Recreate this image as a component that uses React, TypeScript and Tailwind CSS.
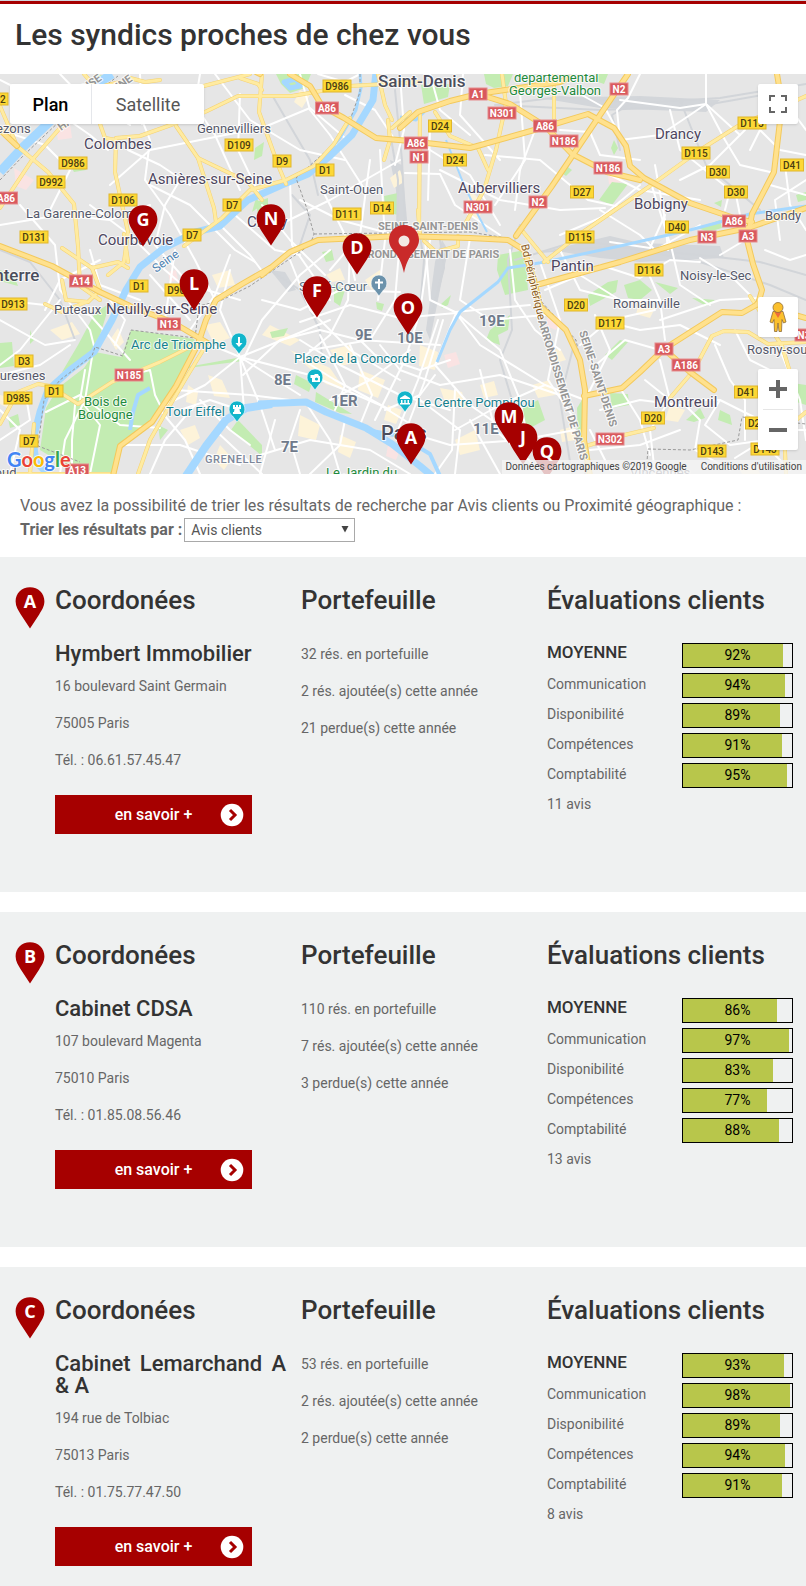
import { type ReactNode } from 'react';

type Point = [number, number];

const parks = [
  'M131 330L160 334L194 339L196 346L178 378L160 408L146 424L119 445L112 474H80L60 462L40 450L46 408L58 388L84 368L95 352L121 357Z',
  'M95 313L110 303L100 335L88 357L62 372L78 345Z',
  'M276 74H311L305 88L290 93L281 84Z',
  'M421 85L450 84L448 97L424 104Z',
  'M484 74H513L508 86L494 88L486 84Z',
  'M597 74H608L604 84L598 82Z',
  'M95 74L105 76L100 80Z',
  'M252 212L256 198L262 205Z',
  'M256 202L268 198V210L258 216Z',
  'M384 196L398 193V215L386 212Z',
  'M612 182L628 184L612 205L599 200Z',
  'M614 140L618 148L614 155L611 148Z',
  'M565 165L572 170L566 176L560 172Z',
  'M498 255L525 250L528 290L505 295L497 270Z',
  'M490 330L510 315L508 330L498 335L500 345L486 340Z',
  'M588 295L608 282L618 280L616 292L590 306Z',
  'M624 285L640 280L652 290L640 300L628 298Z',
  'M655 282L678 288L670 294Z',
  'M692 298L715 300L706 306Z',
  'M698 228L720 220L722 228L708 232Z',
  'M714 203L722 200L721 207Z',
  'M610 393L628 394L629 405L612 408Z',
  'M577 408L585 395L583 440H578Z',
  'M720 410L730 415L732 425L718 420Z',
  'M686 420L700 408L705 418L694 422Z',
  'M605 355L620 340L628 342L612 360Z',
  'M316 392L352 414L340 413L315 402Z',
  'M296 375L312 383L309 392L294 384Z',
  'M523 408L538 400L545 420L530 428L520 420Z',
  'M334 284L345 290L340 306L334 302Z',
  'M322 252L332 250L334 260L326 262Z',
  'M270 332L288 328L284 336L272 338Z',
  'M187 367L242 357L243 361L188 368Z',
  'M231 430L238 420L262 445L262 456Z',
  'M158 425L168 430L160 440Z',
  'M0 343L12 342L14 366L0 368Z',
  'M0 270L14 276L18 286L0 281Z',
  'M8 418L18 414L20 425L10 428Z',
  'M70 165L82 160L86 170L74 172Z',
  'M255 148L264 142L262 156L254 160Z',
  'M440 305L451 295L448 305L442 308Z',
  'M376 302L384 304L382 311L377 309Z',
  'M786 382L806 385V405L790 400Z',
  'M30 330L34 340L30 344Z',
  'M796 195L806 192V200L798 202Z',
];

const blocks = [
  'M262 335L290 346L300 340L270 325Z',
  'M205 325L220 322L230 338L214 344Z',
  'M208 375L222 380L230 398L214 396Z',
  'M212 275L230 270L235 285L218 288Z',
  'M188 385L198 392L196 405L186 402Z',
  'M290 350L330 368L345 390L326 384Z',
  'M330 350L350 345L360 362L340 366Z',
  'M360 370L385 380L378 398L358 390Z',
  'M420 345L438 352L435 370L419 366Z',
  'M388 405L402 410L396 424L384 420Z',
  'M440 388L462 392L466 408L446 405Z',
  'M480 385L494 381L498 395L484 398Z',
  'M340 435L356 442L350 458L338 452Z',
  'M455 440L475 430L480 450L460 455Z',
  'M300 415L320 425L316 440L298 436Z',
  'M180 430L195 425L200 438L188 445Z',
  'M220 445L232 458L224 470L214 460Z',
  'M365 280L380 270L386 285L372 290Z',
  'M326 275L340 268L345 280L332 282Z',
  'M300 90L310 95L302 108L294 102Z',
  'M390 178L400 170L404 182L394 188Z',
  'M470 190L485 205L478 220L465 212Z',
  'M532 385L550 380L555 395L538 398Z',
  'M560 430L574 426L576 440L562 442Z',
  'M640 300L655 308L650 318L636 314Z',
  'M670 405L685 410L678 422L665 420Z',
  'M548 352L560 348L566 360L552 364Z',
  'M50 330L72 322L80 334L62 340Z',
  'M110 340L118 328L124 342L116 350Z',
  'M0 395L14 398L8 408L0 404Z',
  'M740 470L755 462L760 474H742Z',
];

const pinkBlocks = [
  'M14 168L34 180L26 190L16 186Z',
  'M56 128L70 124L72 138L58 140Z',
  'M608 175L620 170L622 182L609 184Z',
  'M444 355L456 352L460 364L448 368Z',
  'M168 272L176 270L178 280L170 282Z',
  'M388 445L400 450L396 460L386 456Z',
  'M548 314L562 318L556 330L546 326Z',
];

const rails = [
  'M495 105L560 97L640 103L720 98L806 84',
  'M498 105L600 110L700 106L780 92',
  'M515 260L580 240L640 250L700 255L760 262L806 275',
  'M540 252L620 246L700 262L770 285L806 300',
  'M395 90L402 160L405 225',
  'M388 120L398 180L397 230',
  'M418 225L424 260L420 310',
  'M440 240L444 268L430 320',
  'M270 270L300 290L320 330L322 360',
  'M292 195L310 215L300 245',
  'M620 150L612 115L640 98',
  'M272 95L310 160L318 195',
  'M0 250L30 262L60 300L75 340',
  'M520 225L508 260L512 330L500 360L512 400',
  'M680 100L706 165L760 210',
  'M575 340L560 400L572 474',
];

const rivers = [
  { d: 'M0 172L22 148L60 112L88 90L112 74', w: 9 },
  { d: 'M376 72L373 100L352 135L330 156L308 174L284 184L248 200L220 226L196 232L164 248L140 267L126 290L112 320L94 352L70 370L48 390L40 412L33 440L36 462L50 476', w: 7 },
  { d: 'M360 72L361 88L356 110L340 138L318 164L300 174', w: 3 },
  { d: 'M272 404L246 408L226 420L206 446L186 476', w: 8 },
  { d: 'M258 404L306 402L326 412L366 428L392 444L420 466L432 476', w: 7 },
  { d: 'M366 430L400 436L430 454L440 476', w: 4 },
  { d: 'M437 362L450 330L460 312L498 282L508 268L545 262L620 246L690 230L750 214L806 206', w: 3 },
  { d: 'M446 140L462 180L478 215L487 232', w: 2 },
  { d: 'M400 117L416 120L424 112', w: 3 },
  { d: 'M150 388L138 395L133 412L130 430', w: 4 },
  { d: 'M284 82L296 79L300 86L290 88Z', w: 5 },
];

const streets = [
  'M0 80L40 100L90 135L108 150', 'M60 74L85 100L130 125', 'M130 90L150 140L145 180L170 215', 'M110 185L150 150L200 140L250 130',
  'M0 130L45 145L70 170L50 210', 'M0 225L60 215L110 220L150 205', 'M20 205L55 245L60 290L90 330L95 350', 'M140 74L142 124',
  'M200 74L195 105L215 135L240 190', 'M215 74L250 120L300 150L345 160', 'M240 94L238 150L262 200', 'M262 128L310 108L345 138',
  'M300 74L310 110L330 135L365 190', 'M345 95L375 110L395 140', 'M318 74L345 82L360 74', 'M150 185L190 205L235 250L255 262',
  'M170 215L195 260L215 300', 'M180 180L165 205L155 245', 'M128 150L160 165L190 185', 'M90 205L130 235L165 270L200 300',
  'M220 225L250 255L265 275', 'M235 215L275 250L300 255', 'M262 205L290 240L325 275', 'M290 180L292 245L330 300',
  'M300 200L340 220L395 235', 'M325 195L345 235L355 280', 'M370 160L360 235L330 270', 'M380 150L385 240L378 300',
  'M285 222L330 200L400 160', 'M400 74L404 130L395 165', 'M430 74L440 110L470 135', 'M463 74L460 115L500 160',
  'M520 92L525 160L495 205', 'M485 155L540 160L588 200L620 207', 'M440 170L500 200L560 210L605 208', 'M405 173L440 174L455 205L500 235',
  'M422 145L470 175L500 225', 'M430 130L428 200', 'M535 130L520 170L515 210', 'M560 130L590 132L600 155L640 160',
  'M580 94L605 108L620 135', 'M640 74L628 98L617 110L620 140', 'M620 100L680 108L706 104L740 135', 'M706 74L706 104L690 115L660 135L620 140',
  'M706 104L725 140L740 165L770 172', 'M670 110L680 150L730 190L725 210', 'M655 165L665 220L668 250', 'M600 170L640 190L700 200',
  'M680 180L710 165L745 130', 'M750 150L760 130L780 150L806 155', 'M780 95L806 130', 'M770 185L806 195', 'M785 165L790 205L806 230',
  'M735 190L745 240L720 255', 'M600 210L640 235L655 250L700 225', 'M560 235L600 218L640 185', 'M665 215L650 248L610 242',
  'M650 180L672 250L680 285L710 305', 'M560 250L580 290L620 300', 'M545 290L580 275L620 300L660 300', 'M600 265L640 278L670 260L700 262',
  'M645 265L660 300L665 340', 'M700 258L735 280L750 295', 'M660 320L720 300L760 298', 'M600 320L640 330L680 325L720 345',
  'M580 345L610 320L655 310', 'M590 370L625 340L660 350', 'M585 400L610 350L595 315', 'M620 388L640 420L650 455',
  'M645 380L670 400L720 400L760 420', 'M680 400L700 420L695 450L730 470', 'M720 400L705 425L730 445L765 440', 'M715 345L730 380L745 400L745 440',
  'M735 330L750 360L790 380', 'M660 360L670 400L650 430L655 474', 'M600 410L640 400L680 405', 'M590 430L610 470', 'M680 430L640 445L590 450',
  'M540 262L560 320L548 380L575 420', 'M510 250L515 300L535 330L560 350', 'M470 238L460 300L490 320L545 315', 'M425 240L430 300L455 312L530 305',
  'M456 313L480 345L545 385L585 400', 'M456 313L435 365L470 405L520 440', 'M456 313L400 318L350 305L300 322', 'M456 313L500 350L520 400L530 450',
  'M430 240L420 312L405 360L375 420', 'M438 320L418 380L398 430', 'M443 320L424 383L404 435', 'M400 240L395 300L370 340L310 350',
  'M350 250L348 300L330 335L300 360', 'M290 260L310 310L350 350L400 380', 'M262 300L300 310L340 290L400 292', 'M243 375L280 340L320 330L360 340L440 345',
  'M243 360L262 320L300 275L330 250', 'M240 357L204 342', 'M240 357L310 375L380 405L420 430', 'M240 357L300 395', 'M240 357L260 405L275 450',
  'M240 357L205 385L165 405', 'M240 357L220 310L230 270', 'M240 357L270 345L330 320', 'M240 357L244 410',
  'M300 340L340 365L400 395L450 410', 'M295 355L335 380L390 410', 'M320 335L345 385L335 410', 'M350 345L372 395L360 425', 'M380 345L400 370L440 385',
  'M330 400L370 380L410 350', 'M385 410L420 395L435 375', 'M360 340L375 355L420 370L450 360', 'M420 400L460 430L455 474', 'M440 385L500 375L560 395',
  'M455 430L500 405L545 385', 'M400 430L450 445L520 440L575 430', 'M455 390L452 450L435 474', 'M470 420L500 474', 'M480 370L495 430L540 470',
  'M300 410L290 440L300 474', 'M306 403L330 440L340 474', 'M345 420L340 445L310 474', 'M260 455L310 440L370 450L410 474', 'M275 420L260 474',
  'M215 430L262 474', 'M240 410L210 400L180 410', 'M200 400L230 430L250 445', 'M160 410L185 440L200 474', 'M195 405L165 440L150 474',
  'M175 390L250 395L290 400', 'M120 445L180 445L240 465', 'M92 357L85 400L65 440L60 474', 'M75 405L72 440L72 474', 'M46 412L80 395L120 425L160 428',
  'M85 370L80 400L100 425L90 474', 'M130 375L150 370L155 395L160 405', 'M75 340L45 345L0 320', 'M0 300L45 305L90 315L130 360', 'M60 300L40 325L20 350L0 365',
  'M0 375L40 365L70 345', 'M0 440L30 420L25 390', 'M10 474L20 430L0 410', 'M110 300L125 320L115 345', 'M100 260L60 280L45 310', 'M90 250L100 285L140 300',
  'M155 245L190 285L240 300', 'M150 275L190 320', 'M175 250L165 320', 'M230 255L215 295L190 330', 'M765 445L790 470', 'M735 458L780 430L806 430',
  'M780 350L800 400L806 440', 'M765 250L790 260L806 255', 'M780 240L775 200L806 180',
];

const arteries = [
  'M0 106L17 146L48 172L74 204L78 246L80 286L100 300', 'M0 208L32 160L60 128L88 103', 'M100 124L105 138L116 140L115 172L121 200L128 232L124 262L108 275',
  'M116 138L140 136L168 126L205 112L238 96L292 96L350 86L420 82', 'M176 126L198 158L248 182L262 200', 'M198 158L214 208L216 222',
  'M84 74L96 88L120 82', 'M196 88L250 74', 'M262 74L259 112L278 165L286 184', 'M130 78L145 82L160 80', 'M240 78L258 84L262 90',
  'M184 246L222 218L250 190L286 180L314 166L334 144L350 118', 'M62 248L92 268L118 262L128 268', 'M62 280L66 300L88 302L100 290L92 268',
  'M378 74L385 105L392 120', 'M392 128L410 112', 'M384 160L390 140L388 120', 'M502 74L506 104L496 150L484 190L464 226',
  'M554 74L554 118', 'M435 112L450 136L478 148L488 170', 'M548 262L520 228L516 234', 'M544 262L580 234L650 186L700 150L738 126L806 96',
  'M418 210L420 236', 'M0 424L18 392L38 384L50 386L78 404L112 382L160 362L196 344', 'M45 304L62 312L86 302', 'M128 262L124 234',
  'M424 241L436 252L458 246L458 236', 'M670 398L694 370L712 336L724 331L748 332L768 344L806 342', 'M586 446L620 436L654 428', 'M30 474L34 424',
  'M420 112L419 230', 'M750 296L782 346L790 372', 'M786 474L784 430L806 412', 'M208 342L186 378L166 412L150 440L138 474', 'M0 474H110',
];

const motorways = [
  'M0 246L52 266L100 292L130 306L172 322L206 342', 'M260 74L256 72', 'M290 74L310 86L322 106L344 118L376 138L410 141L470 148L545 127L588 114L614 128L626 146L630 166L644 178L690 203L734 218L752 222',
  'M400 128L418 112L450 101L478 94L510 104L545 126L572 154L607 172L640 180', 'M478 94L560 82L568 78', 'M628 74L602 112L552 186L516 236',
  'M777 74L782 104L774 172L752 214L747 240L753 264L762 290L758 304L742 313L722 312L700 326L664 349L640 372L622 388L584 396',
  'M540 284L620 262L690 240L748 228L806 208', 'M664 349L690 372L714 390', 'M757 304L806 318',
  'M270 268L242 284L216 300L206 320L198 344L176 386L152 422L120 446L113 476',
  'M262 275L290 252L318 240L400 236L470 238L508 240L524 250L534 280L540 306L566 330L580 360L585 390L584 440L590 476',
  'M0 130L17 146',
];

const borders = [
  'M0 180L24 155L62 119L92 96L118 76', 'M360 74L360 92L350 120L334 144L296 178L306 206L314 234L310 245L250 286L222 300L199 306L195 338L131 330L123 356L95 347L92 356L60 380L44 400L38 446L80 462',
  'M314 234L470 232L506 238L526 250L540 300L576 340L584 380L585 474', 'M646 474L648 449L690 450L738 440L742 417L806 424',
];

const yellowBadges: [string, number, number][] = [
  ['D986', 337, 86], ['D109', 239, 145], ['D986', 73, 163], ['D992', 51, 182], ['D9', 282, 161], ['D1', 325, 170], ['D106', 123, 200],
  ['D7', 232, 205], ['D111', 347, 214], ['D14', 382, 208], ['D131', 34, 237], ['D7', 192, 235], ['D992', -6, 99], ['D24', 440, 126],
  ['D24', 455, 160], ['D115', 752, 123], ['D115', 696, 153], ['D30', 718, 172], ['D30', 736, 192], ['D41', 792, 165], ['D27', 582, 192],
  ['D40', 677, 227], ['D115', 580, 237], ['D116', 649, 270], ['D1', 139, 286], ['D908', 179, 290], ['D913', 13, 304], ['D3', 24, 361],
  ['D1', 54, 391], ['D985', 18, 398], ['D7', 29, 441], ['D20', 576, 305], ['D117', 610, 323], ['D41', 746, 392], ['D20', 653, 418],
  ['D143', 712, 451], ['D20', 757, 423], ['D143', 765, 449],
];

const redBadges: [string, number, number][] = [
  ['A1', 478, 94], ['N301', 502, 113], ['A86', 545, 126], ['N186', 564, 141], ['A86', 416, 143], ['N1', 419, 157], ['N186', 608, 168],
  ['N301', 478, 207], ['N2', 538, 202], ['N2', 619, 89], ['A86', 734, 221], ['N3', 707, 237], ['A3', 748, 236], ['A86', 327, 108],
  ['A86', 6, 198], ['A14', 81, 281], ['N13', 169, 324], ['N185', 129, 375], ['A13', 77, 470], ['A3', 664, 349], ['A186', 686, 365],
  ['N302', 610, 439], ['N3', 804, 335],
];

const labelStyles = {
  town: 'fill-[#4d4660] text-[15px]',
  suburb: 'fill-[#55586a] text-[13px]',
  city: 'fill-[#4a4d5c] text-[17px] font-medium',
  capital: 'fill-[#4a4d5c] text-[20px] font-medium',
  district: 'fill-[#6f7a8b] text-[15px] font-bold',
  park: 'fill-[#1f8a3c] text-[13px]',
  sight: 'fill-[#16808f] text-[13px]',
  church: 'fill-[#5d7386] text-[13px]',
  area: 'fill-[#969696] text-[11px] font-bold',
  quarter: 'fill-[#7d879a] text-[11px] font-medium tracking-wider',
  water: 'fill-[#4a7fb0] text-[12px]',
  road: 'fill-[#8a5a20] text-[11px]',
};

type Label = [string, number, number, keyof typeof labelStyles, number?];

const labels: Label[] = [
  ['Bezons', -12, 133, 'suburb'], ['Gennevilliers', 197, 133, 'suburb'], ['Colombes', 84, 149, 'town'], ['Asnières-sur-Seine', 148, 184, 'town'],
  ['Saint-Ouen', 320, 194, 'suburb'], ['La Garenne-Colombes', 26, 218, 'suburb'], ['Courbevoie', 98, 245, 'town'], ['Clichy', 247, 227, 'town'],
  ['Saint-Denis', 378, 87, 'city'], ['départemental', 514, 82, 'park'], ['Georges-Valbon', 509, 95, 'park'], ['Drancy', 655, 139, 'town'],
  ['Aubervilliers', 458, 193, 'town'], ['Bobigny', 634, 209, 'town'], ['Bondy', 765, 220, 'suburb'], ['SEINE-SAINT-DENIS', 378, 230, 'area'],
  ['ARRONDISSEMENT DE PARIS', 353, 258, 'area'], ['Pantin', 551, 271, 'town'], ['Noisy-le-Sec', 680, 280, 'suburb'], ['Romainville', 613, 308, 'suburb'],
  ['Rosny-sous-Bois', 747, 354, 'suburb'], ['Montreuil', 654, 407, 'town'], ['Vincennes', 630, 477, 'suburb'], ['Nanterre', -27, 281, 'city'],
  ['Puteaux', 54, 314, 'suburb'], ['Neuilly-sur-Seine', 106, 314, 'town'], ['Seine', 156, 273, 'water', -36], ['Arc de Triomphe', 131, 349, 'sight'],
  ['Suresnes', -8, 380, 'suburb'], ['Bois de', 84, 406, 'park'], ['Boulogne', 78, 419, 'park'], ['Tour Eiffel', 166, 416, 'sight'],
  ['GRENELLE', 205, 463, 'quarter'], ['Saint-Cloud', -50, 477, 'suburb'], ['Sacré-Cœur', 299, 291, 'church'], ['9E', 355, 340, 'district'], ['10E', 397, 343, 'district'],
  ['19E', 479, 326, 'district'], ['Place de la Concorde', 294, 363, 'sight'], ['8E', 274, 385, 'district'], ['1ER', 331, 406, 'district'],
  ['Le Centre Pompidou', 417, 407, 'sight'], ['Paris', 381, 440, 'capital'], ['11E', 473, 434, 'district'], ['7E', 281, 452, 'district'],
  ['Le Jardin du', 326, 477, 'park'], ['Bd Périphérique', 521, 245, 'road', 77], ['ARRONDISSEMENT DE PARIS', 538, 321, 'area', 73],
  ['SEINE-SAINT-DENIS', 579, 332, 'area', 72], ['VAL-D’OISE', 55, 113, 'area', -35], ['HAUTS-DE-SEINE', 61, 131, 'area', -35],
];

const pins: [string, number, number][] = [
  ['G', 143, 205], ['N', 271, 204], ['D', 357, 233], ['F', 317, 276], ['L', 194, 269], ['O', 408, 293], ['A', 411, 423], ['M', 509, 402], ['J', 523, 423], ['Q', 547, 437],
];

function PinShape({ letter }: { letter: string }) {
  return (
    <>
      <path d="M15 0.3C23.2 0.3 29.4 6.4 29.4 14.3C29.4 19.4 26.8 23.4 24.2 27.4L15 41.6L5.8 27.4C3.2 23.4 0.6 19.4 0.6 14.3C0.6 6.4 6.8 0.3 15 0.3Z" fill="#a60000" />
      <text x="15" y="21" textAnchor="middle" className="fill-white font-['Open_Sans',sans-serif] text-[18px] font-bold">
        {letter}
      </text>
    </>
  );
}

function Poi({ at, color, children }: { at: Point; color: string; children: ReactNode }) {
  return (
    <g transform={`translate(${at[0]} ${at[1]})`}>
      <path d="M0 12L-4.5 6C-10 3 -9 -9 0 -9C9 -9 10 3 4.5 6Z" fill={color} stroke="#fff" strokeWidth="0.6" />
      {children}
    </g>
  );
}

function Strokes({ paths, color, width }: { paths: string[]; color: string; width: number }) {
  return (
    <g fill="none" stroke={color} strokeWidth={width} strokeLinejoin="round" strokeLinecap="round">
      {paths.map((d, i) => <path key={i} d={d} />)}
    </g>
  );
}

function Badge({ text, x, y, red }: { text: string; x: number; y: number; red?: boolean }) {
  const width = 8 + text.length * 5;
  return (
    <g>
      <rect x={x - width / 2} y={y - 6} width={width} height={12} fill={red ? '#d9595d' : '#fdd835'} stroke={red ? '#e58b8d' : '#e0b62c'} strokeWidth="1" />
      <text x={x} y={y + 4} textAnchor="middle" className={red ? 'fill-white text-[10px] font-bold' : 'fill-[#4a3d12] text-[10px] font-medium'}>
        {text}
      </text>
    </g>
  );
}

function MapDrawing() {
  return (
    <svg viewBox="0 74 806 400" preserveAspectRatio="xMidYMid slice" className="block h-full w-full" role="img" aria-label="Carte de Paris et de sa banlieue">
      <rect y="74" width="806" height="400" fill="#e6e6e6" />
      <g fill="#d3d6da">
        <path d="M540 98L640 96L720 100L706 112L600 108Z" />
        <path d="M550 250L610 236L640 243L720 246L724 258L640 262L600 258Z" />
        <path d="M390 160L402 165L408 230L398 232L396 190Z" />
        <path d="M435 262L442 240L448 250L430 340L426 330Z" />
        <path d="M270 270L285 272L296 290L288 292Z" />
      </g>
      <g fill="#fdf3d9">{blocks.map((d) => <path key={d} d={d} />)}</g>
      <g fill="#fae3e3">{pinkBlocks.map((d) => <path key={d} d={d} />)}</g>
      <g fill="#c3ecb2">{parks.map((d) => <path key={d} d={d} />)}</g>
      <Strokes paths={rails} color="#d2d5d9" width={2} />
      <Strokes paths={streets} color="#ffffff" width={2} />
      <g fill="none" stroke="#a5d8ff" strokeLinejoin="round">
        {rivers.map((r) => <path key={r.d} d={r.d} strokeWidth={r.w} />)}
      </g>
      <g fill="none" stroke="#9a9a9a" strokeWidth="1" strokeDasharray="3 2">
        {borders.map((d) => <path key={d} d={d} />)}
      </g>
      <Strokes paths={arteries} color="#f5d271" width={4} />
      <Strokes paths={arteries} color="#ffeba1" width={3} />
      <Strokes paths={motorways} color="#f3c95c" width={6} />
      <Strokes paths={motorways} color="#ffe18d" width={4} />
      <g className="font-[Roboto,sans-serif]">
        <g stroke="#ffffff" strokeWidth="2" strokeOpacity="0.8" strokeLinejoin="round" style={{ paintOrder: 'stroke' }}>
          {labels.map(([text, x, y, kind, angle]) => (
            <text key={`${text}${x}`} x={x} y={y} className={labelStyles[kind]} transform={angle ? `rotate(${angle} ${x} ${y})` : undefined}>
              {text}
            </text>
          ))}
        </g>
        {yellowBadges.map(([text, x, y]) => <Badge key={`${text}${x}`} text={text} x={x} y={y} />)}
        {redBadges.map(([text, x, y]) => <Badge key={`${text}${x}`} text={text} x={x} y={y} red />)}
      </g>
      <Poi at={[239, 342]} color="#12b5cb">
        <path d="M-1 -5H1V1H3.5L0 5L-3.5 1H-1Z" fill="#fff" />
      </Poi>
      <Poi at={[237, 410]} color="#12b5cb">
        <path d="M-4 -5H-2V-3H-1V-5H1V-3H2V-5H4V-1H2.5L3 2H4V4H-4V2H-3L-2.5 -1H-4Z" fill="#fff" />
      </Poi>
      <Poi at={[315, 378]} color="#12b5cb">
        <path d="M-4.5 -3L-1 -3L0 -4H3L4 -2H5V4H-3V0H-4.5Z" fill="#fff" />
        <circle cx="1.5" cy="1" r="1.6" fill="#12b5cb" />
      </Poi>
      <Poi at={[405, 400]} color="#12b5cb">
        <path d="M0 -5L5 -2V-1H-5V-2ZM-4 0H-2.5V3H-4ZM-0.7 0H0.7V3H-0.7ZM2.5 0H4V3H2.5ZM-5 3H5V4.5H-5Z" fill="#fff" />
      </Poi>
      <Poi at={[379, 284]} color="#6b92ab">
        <path d="M-1 -5H1V-2.5H4V-0.5H1V5H-1V-0.5H-4V-2.5H-1Z" fill="#fff" />
      </Poi>
      <g>
        <path d="M404 225C412.5 225 419 231.6 419 240C419 245.5 416 249 412 254C408 259.5 406 264 404 273C402 264 400 259.5 396 254C392 249 389 245.5 389 240C389 231.6 395.5 225 404 225Z" fill="#c92a2a" />
        <circle cx="404" cy="241" r="5.5" fill="#f3e9e4" />
      </g>
      {pins.map(([letter, x, y]) => (
        <g key={letter} transform={`translate(${x - 15} ${y})`}>
          <PinShape letter={letter} />
        </g>
      ))}
      <text x="7" y="467" stroke="#fff" strokeWidth="2" strokeOpacity="0.8" style={{ paintOrder: 'stroke' }} className="font-[Lato,sans-serif] text-[20px] font-bold">
        <tspan fill="#4285f4">G</tspan><tspan fill="#ea4335">o</tspan><tspan fill="#fbbc05">o</tspan><tspan fill="#4285f4">g</tspan><tspan fill="#34a853">l</tspan><tspan fill="#ea4335">e</tspan>
      </text>
    </svg>
  );
}

function SyndicMap() {
  return (
    <div className="relative h-[400px] overflow-hidden">
      <MapDrawing />
      <div className="absolute top-2.5 left-2.5 flex h-10 rounded-xs bg-white text-[18px] shadow">
        <button type="button" className="w-[82px] border-r border-gray-200 font-medium text-black">Plan</button>
        <button type="button" className="w-28 text-[#565656]">Satellite</button>
      </div>
      <button type="button" aria-label="Passer en plein écran" className="absolute top-2.5 right-2 flex size-10 items-center justify-center rounded-xs bg-white shadow">
        <svg viewBox="0 0 18 18" className="size-[18px]" fill="#666">
          <path d="M0 0V6H2V2H6V0ZM12 0V2H16V6H18V0ZM16 12V16H12V18H18V12ZM2 12H0V18H6V16H2Z" />
        </svg>
      </button>
      <button type="button" aria-label="Street View" className="absolute right-2 bottom-[137px] flex size-10 items-center justify-center rounded-xs bg-white shadow">
        <svg viewBox="0 0 18 30" className="h-[30px] w-[18px]" fill="#fbc02d" stroke="#8f6d3a" strokeWidth="0.8" strokeLinejoin="round">
          <path d="M4 9.5H14L17 20L14.5 21L13 17.5L12.5 29.5H10L9 21L8 29.5H5.5L5 17.5L3.5 21L1 20Z" />
          <path d="M5.5 10H12.5L9 16Z" fill="#ee6c3a" stroke="none" />
          <circle cx="9" cy="5.5" r="5" />
        </svg>
      </button>
      <div className="absolute right-2 bottom-6 flex w-10 flex-col items-center rounded-xs bg-white shadow">
        <button type="button" aria-label="Zoom avant" className="flex size-10 items-center justify-center">
          <svg viewBox="0 0 18 18" className="size-[18px]" fill="#666"><path d="M7 0H11V7H18V11H11V18H7V11H0V7H7Z" /></svg>
        </button>
        <span className="h-px w-[30px] bg-[#e6e6e6]" />
        <button type="button" aria-label="Zoom arrière" className="flex size-10 items-center justify-center">
          <svg viewBox="0 0 18 18" className="size-[18px]" fill="#666"><path d="M0 7H18V11H0Z" /></svg>
        </button>
      </div>
      <div className="absolute right-0 bottom-0 flex gap-3.5 bg-[#f5f5f5]/80 px-1 text-[10px] leading-[14px] text-[#444]">
        <span>Données cartographiques ©2019 Google</span>
        <a href="#conditions">Conditions d'utilisation</a>
      </div>
    </div>
  );
}

interface Syndic {
  letter: string;
  name: string;
  street: string;
  city: string;
  phone: string;
  portfolio: string[];
  average: number;
  ratings: [string, number][];
  reviews: number;
}

const syndics: Syndic[] = [
  {
    letter: 'A', name: 'Hymbert Immobilier', street: '16 boulevard Saint Germain', city: '75005 Paris', phone: '06.61.57.45.47',
    portfolio: ['32 rés. en portefuille', '2 rés. ajoutée(s) cette année', '21 perdue(s) cette année'],
    average: 92, ratings: [['Communication', 94], ['Disponibilité', 89], ['Compétences', 91], ['Comptabilité', 95]], reviews: 11,
  },
  {
    letter: 'B', name: 'Cabinet CDSA', street: '107 boulevard Magenta', city: '75010 Paris', phone: '01.85.08.56.46',
    portfolio: ['110 rés. en portefuille', '7 rés. ajoutée(s) cette année', '3 perdue(s) cette année'],
    average: 86, ratings: [['Communication', 97], ['Disponibilité', 83], ['Compétences', 77], ['Comptabilité', 88]], reviews: 13,
  },
  {
    letter: 'C', name: 'Cabinet Lemarchand A & A', street: '194 rue de Tolbiac', city: '75013 Paris', phone: '01.75.77.47.50',
    portfolio: ['53 rés. en portefuille', '2 rés. ajoutée(s) cette année', '2 perdue(s) cette année'],
    average: 93, ratings: [['Communication', 98], ['Disponibilité', 89], ['Compétences', 94], ['Comptabilité', 91]], reviews: 8,
  },
];

function ColumnTitle({ children }: { children: ReactNode }) {
  return <h2 className="text-[26px] leading-[26px] font-medium text-[#333]">{children}</h2>;
}

function Bar({ value }: { value: number }) {
  return (
    <div className="relative h-[25px] w-[111px] shrink-0 border border-black">
      <div className="h-full bg-[#b8c64b]" style={{ width: `${value}%` }} />
      <span className="absolute inset-0 text-center leading-[22px] text-black">{value}%</span>
    </div>
  );
}

function SyndicCard({ syndic }: { syndic: Syndic }) {
  return (
    <section className="flex bg-[#eff1f1] pt-[30px] pr-[13px] pb-[58px] pl-[15px] text-[14px] leading-[22px] text-[#666] last:pb-5">
      <svg viewBox="0 0 30 42" className="mr-2.5 h-[42px] w-[30px] shrink-0" role="img" aria-label={`Repère ${syndic.letter}`}>
        <PinShape letter={syndic.letter} />
      </svg>
      <div className="grid flex-1 grid-cols-3">
        <div className="pr-[15px]">
          <ColumnTitle>Coordonées</ColumnTitle>
          <h3 className="mt-[30px] text-justify text-[22px] leading-[22px] font-medium text-[#333]">{syndic.name}</h3>
          <div className="mt-2.5 flex flex-col gap-[15px]">
            <p>{syndic.street}</p>
            <p>{syndic.city}</p>
            <p>Tél. : {syndic.phone}</p>
          </div>
          <a href={`#syndic-${syndic.letter}`} className="relative mt-6 flex h-[39px] w-[197px] items-center justify-center bg-[#a60000] text-[16px] font-medium text-white">
            en savoir +
            <svg viewBox="0 0 24 24" className="absolute right-2 size-6">
              <circle cx="12" cy="12" r="11.3" fill="#fff" />
              <path d="M10 7L15 12L10 17" fill="none" stroke="#a60000" strokeWidth="3" />
            </svg>
          </a>
        </div>
        <div className="pr-[15px]">
          <ColumnTitle>Portefeuille</ColumnTitle>
          <div className="mt-[30px] flex flex-col gap-[15px]">
            {syndic.portfolio.map((line) => <p key={line}>{line}</p>)}
          </div>
        </div>
        <div>
          <ColumnTitle>Évaluations clients</ColumnTitle>
          <div className="mt-[30px] flex flex-col gap-[5px]">
            <div className="flex justify-between">
              <strong className="text-[17px] leading-[18px] font-medium text-[#333]">MOYENNE</strong>
              <Bar value={syndic.average} />
            </div>
            {syndic.ratings.map(([label, value]) => (
              <div key={label} className="flex justify-between">
                <span>{label}</span>
                <Bar value={value} />
              </div>
            ))}
            <p>{syndic.reviews} avis</p>
          </div>
        </div>
      </div>
    </section>
  );
}

export default function App() {
  return (
    <div className="bg-white font-[Roboto,sans-serif]">
      <header className="border-t border-gray-300">
        <div className="h-[3px] bg-[#a60000]" />
        <h1 className="px-[15px] pt-[11px] pb-[19px] text-[30px] leading-10 font-medium text-[#333]">Les syndics proches de chez vous</h1>
      </header>
      <main>
        <SyndicMap />
        <form className="px-5 pt-5 pb-[15px] text-[16px] leading-6 text-[#666]">
          <p>Vous avez la possibilité de trier les résultats de recherche par Avis clients ou Proximité géographique :</p>
          <div className="flex items-center gap-0.5">
            <label htmlFor="tri" className="font-bold">Trier les résultats par :</label>
            <span className="relative">
              <select id="tri" className="block h-6 w-[171px] appearance-none border border-[#a9a9a9] bg-white pl-1.5 text-[14px] leading-5 text-[#555]">
                <option>Avis clients</option>
                <option>Proximité géographique</option>
              </select>
              <svg viewBox="0 0 8 7" className="pointer-events-none absolute top-2 right-1.5 h-[7px] w-2" fill="#444"><path d="M0.5 0H7.5L4 6.5Z" /></svg>
            </span>
          </div>
        </form>
        <div className="flex flex-col gap-5">
          {syndics.map((syndic) => <SyndicCard key={syndic.letter} syndic={syndic} />)}
        </div>
      </main>
    </div>
  );
}
